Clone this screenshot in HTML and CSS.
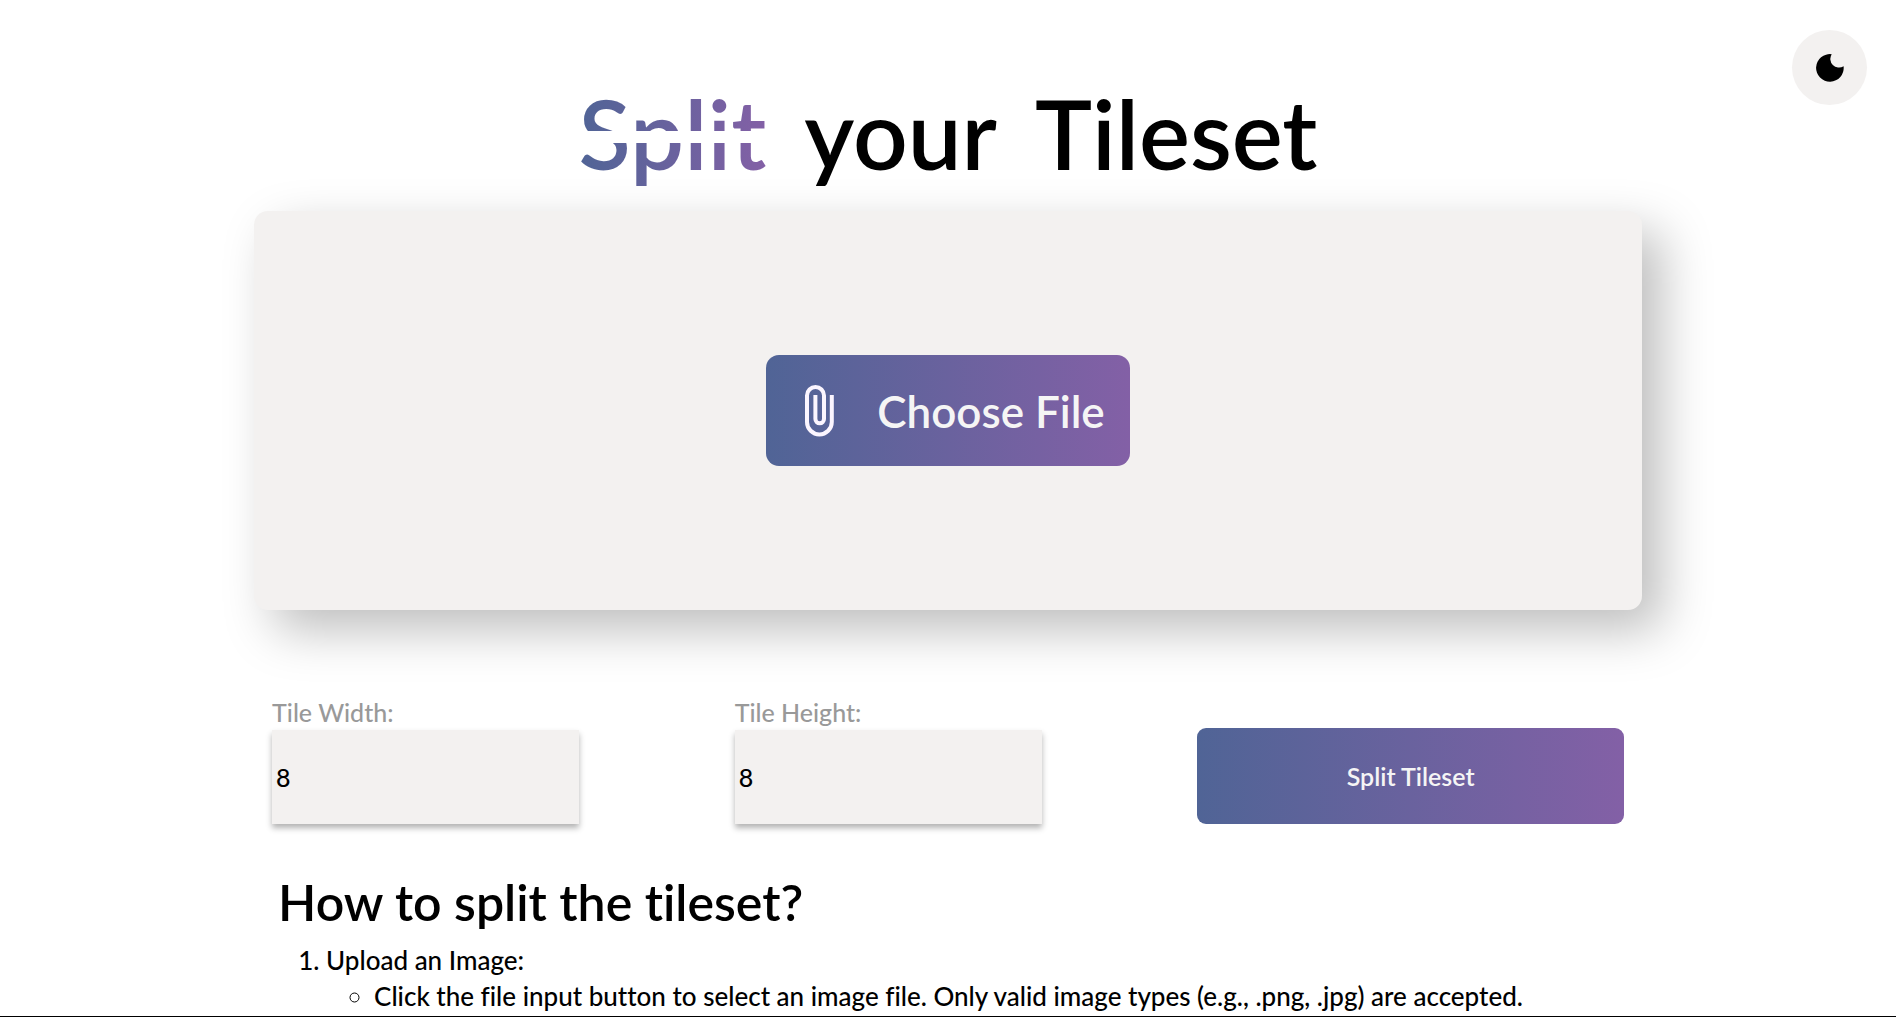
FILE: index.html
```
<!DOCTYPE html>
<html lang="en">
<head>
  <meta charset="utf-8">
  <meta name="viewport" content="width=device-width, initial-scale=1">
  <title>Split your Tileset</title>
  <link rel="stylesheet" href="styles.css">
</head>
<body>
  <button class="theme-toggle" type="button" aria-label="Toggle dark mode">
    <svg class="moon" viewBox="0 0 28 28" aria-hidden="true">
      <path d="M15.7 .2A13.8 13.8 0 1 0 27.6 12.3A8.7 8.7 0 0 1 15.7 .2Z"/>
    </svg>
  </button>
  <main class="page">
    <h1 class="title"><span class="title-split">Split</span> <span>your</span> <span>Tileset</span></h1>
    <section class="dropzone">
      <button class="choose" type="button">
        <svg class="clip" viewBox="0 0 30 52" aria-hidden="true">
          <path d="M26.8 10V37a12.4 12.4 0 0 1-24.8 0V10.5a8.5 8.5 0 0 1 17 0V34a4.3 4.3 0 0 1-8.6 0V10"/>
        </svg>
        <span>Choose File</span>
      </button>
    </section>
    <form class="controls">
      <div class="field">
        <label class="label" for="tile-width">Tile Width:</label>
        <input class="input" id="tile-width" type="number" value="8" min="1">
      </div>
      <div class="field">
        <label class="label" for="tile-height">Tile Height:</label>
        <input class="input" id="tile-height" type="number" value="8" min="1">
      </div>
      <div class="field">
        <button class="submit" type="button">Split Tileset</button>
      </div>
    </form>
    <section class="help">
      <h2 class="help-title">How to split the tileset?</h2>
      <ol class="steps">
        <li>Upload an Image:
          <ul class="details">
            <li>Click the file input button to select an image file. Only valid image types (e.g., .png, .jpg) are accepted.</li>
          </ul>
        </li>
      </ol>
    </section>
  </main>
</body>
</html>
```
FILE: styles.css
```
:root {
  --surface: #f3f1f0;
  --gradient: linear-gradient(to right, #506496, #8360a6);
}

* {
  box-sizing: border-box;
}

body {
  margin: 0;
  min-height: 100vh;
  border-bottom: 1px solid #000;
  background: #fff;
  color: #000;
  font: 500 25px/36px Lato, sans-serif;
  font-variant-ligatures: none;
}

button,
input {
  border: 0;
  font: inherit;
  color: inherit;
}

.theme-toggle {
  position: absolute;
  top: 30px;
  right: 29px;
  display: grid;
  place-items: center;
  width: 75px;
  height: 75px;
  padding: 0;
  border-radius: 50%;
  background: var(--surface);
}

.moon {
  width: 28px;
  height: 28px;
}

.page {
  width: 73.2%;
  margin: 0 auto;
  padding-top: 73px;
}

.title {
  display: flex;
  justify-content: center;
  gap: 38px;
  margin: 0;
  font-size: 96px;
  font-weight: 600;
  line-height: 120px;
}

.title-split {
  background: var(--gradient);
  background-clip: text;
  color: transparent;
  -webkit-mask-image: linear-gradient(#000 58px, transparent 58px 70px, #000 70px);
  mask-image: linear-gradient(#000 58px, transparent 58px 70px, #000 70px);
}

.dropzone {
  display: grid;
  place-items: center;
  min-height: 399px;
  margin-top: 18px;
  border-radius: 14px;
  background: var(--surface);
  box-shadow: 20px 20px 50px rgba(0, 0, 0, .26);
}

.choose {
  display: flex;
  align-items: center;
  gap: 42px;
  height: 111px;
  padding: 0 25px 0 39px;
  border-radius: 13px;
  background: var(--gradient);
  color: #f5f5f5;
  font-size: 44px;
  font-weight: 600;
}

.clip {
  width: 30px;
  height: 52px;
  fill: none;
  stroke: #fbf5ff;
  stroke-width: 4;
}

.controls {
  display: grid;
  grid-template-columns: repeat(3, 1fr);
  align-items: end;
  margin-top: 84px;
}

.field {
  display: flex;
  flex-direction: column;
  padding: 0 18px;
}

.label {
  color: #999;
}

.input {
  width: 72%;
  height: 94px;
  padding: 0 4px;
  background: var(--surface);
  box-shadow: 0 4px 6px rgba(0, 0, 0, .3);
}

.submit {
  height: 96px;
  border-radius: 9px;
  background: var(--gradient);
  color: #f5f5f5;
  font-weight: 600;
}

.help {
  padding: 48px 24px 0;
}

.help-title {
  margin: 0 0 10px;
  font-size: 50px;
  font-weight: 600;
  line-height: 60px;
}

.steps,
.details {
  margin: 0;
  padding-left: 48px;
}

.steps {
  font-size: 26px;
}
```
